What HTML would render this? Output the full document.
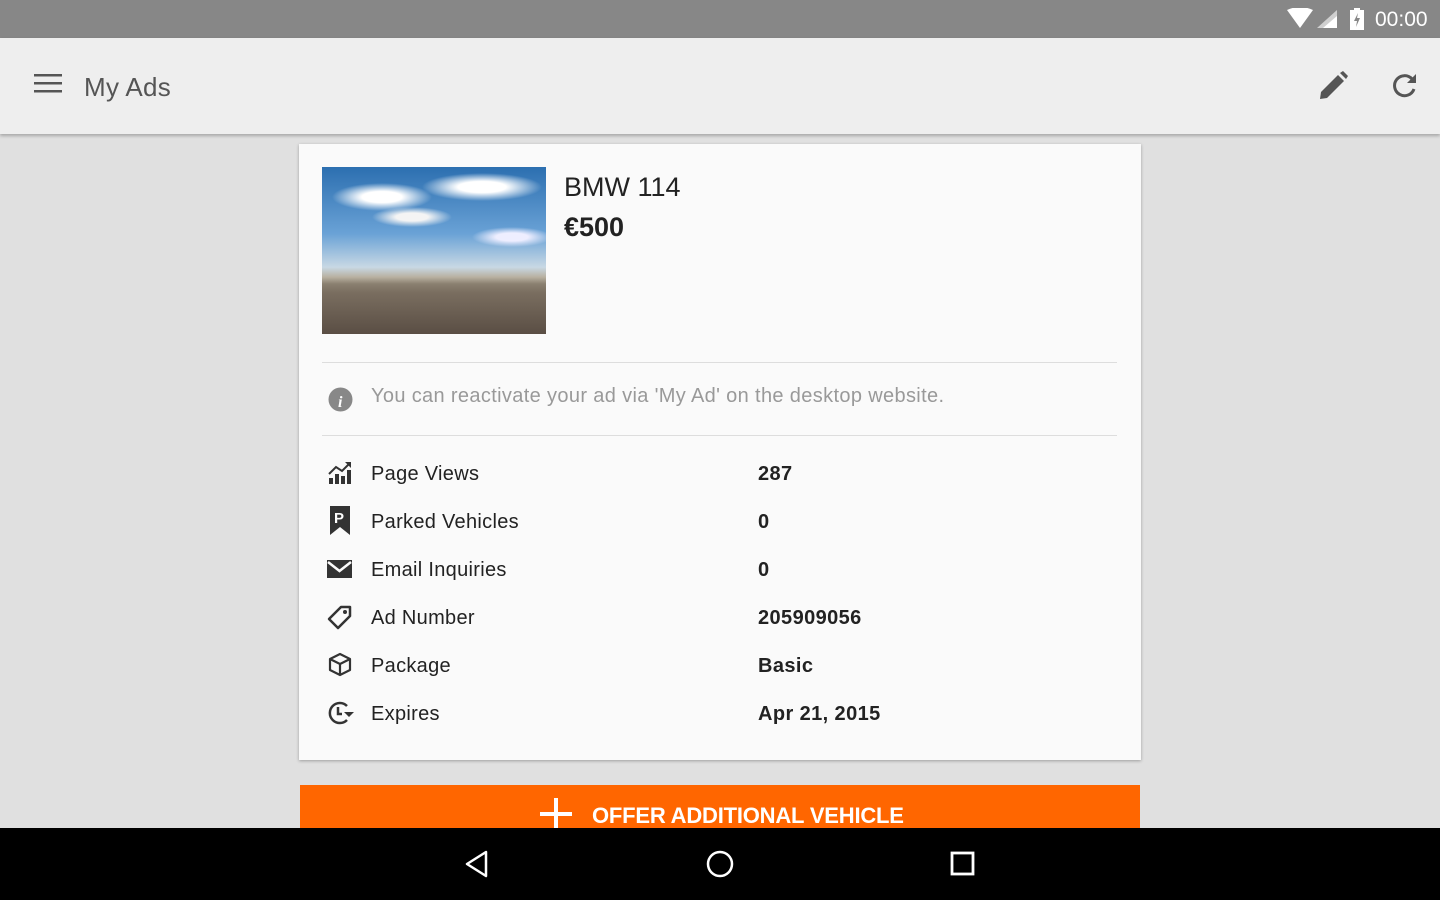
<!DOCTYPE html>
<html><head><meta charset="utf-8"><style>
*{margin:0;padding:0;box-sizing:border-box}
body{width:1440px;height:900px;overflow:hidden;background:#e0e0e0;font-family:"Liberation Sans",Roboto,sans-serif;position:relative}
.sb{position:absolute;top:0;left:0;width:1440px;height:38px;background:#878787;color:#fff}
.tb{position:absolute;top:38px;left:0;width:1440px;height:96px;background:#eeeeee;box-shadow:0 2px 3px rgba(0,0,0,.25)}
.card{position:absolute;left:299px;top:144px;width:842px;height:616px;background:#fafafa;box-shadow:0 1px 3px rgba(0,0,0,.3)}
.row{position:absolute;left:72px;font-size:20px;color:#222;letter-spacing:.3px}
.val{position:absolute;left:459px;font-size:20px;font-weight:bold;color:#222;letter-spacing:.4px}
.ic{position:absolute;left:28px}
.nav{position:absolute;top:828px;left:0;width:1440px;height:72px;background:#000}
.btn{position:absolute;left:300px;top:785px;width:840px;height:60px;background:#ff6600;color:#fff;font-size:22px;font-weight:bold;letter-spacing:-.2px}
</style></head><body>
<div class="sb">
<svg style="position:absolute;left:1287px;top:8px" width="52" height="22"><path d="M0 2 Q13 -4 26 2 L13 20Z" fill="#fff"/><path d="M30 20 L50 2 V20Z" fill="#fff" opacity=".6"/><path d="M36 20 L50 8 V20Z" fill="#fff"/></svg>
<svg style="position:absolute;left:1349px;top:7px" width="16" height="24"><rect x="1" y="3" width="14" height="20" fill="#fff"/><rect x="5" y="1" width="6" height="3" fill="#fff"/><path d="M9 6 L5 14 H8 L7 20 L11 11 H8Z" fill="#878787"/></svg>
<div style="position:absolute;left:1375px;top:8px;font-size:21px">00:00</div>
</div>
<div class="tb">
<svg style="position:absolute;left:34px;top:36px" width="28" height="20"><rect y="0" width="28" height="2.5" fill="#555"/><rect y="8" width="28" height="2.5" fill="#555"/><rect y="16" width="28" height="2.5" fill="#555"/></svg>
<div style="position:absolute;left:84px;top:34px;font-size:26px;color:#555;letter-spacing:.3px">My Ads</div>
<svg style="position:absolute;left:1318px;top:33px" width="30" height="30"><path d="M2 28 L3 21 L20 4 L26 10 L9 27Z" fill="#555"/><path d="M22 2 L25 0 L30 5 L28 8Z" fill="#555"/></svg>
<svg style="position:absolute;left:1390px;top:33px" width="30" height="30"><path d="M22 8 A10 10 0 1 0 24 18" fill="none" stroke="#555" stroke-width="3"/><path d="M17 12 L26 12 L26 3Z" fill="#555"/></svg>
</div>
<div class="card">
<div style="position:absolute;left:23px;top:23px;width:224px;height:167px;background:radial-gradient(ellipse 50px 14px at 60px 30px,#fff 40%,transparent 100%),radial-gradient(ellipse 60px 14px at 160px 20px,#fff 40%,transparent 100%),radial-gradient(ellipse 40px 10px at 90px 50px,#f4f4f4 40%,transparent 100%),radial-gradient(ellipse 40px 10px at 190px 70px,#eef 40%,transparent 100%),linear-gradient(#2c6fb0 0%,#6aa2d6 40%,#c8d8e4 60%,#b8b0a0 66%,#8a8070 70%,#7a6e60 75%,#5a4e44 100%)"></div>
<div style="position:absolute;left:265px;top:28px;font-size:27px;color:#222">BMW 114</div>
<div style="position:absolute;left:265px;top:68px;font-size:27px;font-weight:bold;color:#222">€500</div>
<div style="position:absolute;left:23px;top:218px;width:795px;height:1px;background:#ddd"></div>
<svg style="position:absolute;left:29px;top:243px" width="25" height="25"><circle cx="12.5" cy="12.5" r="12" fill="#888"/><text x="10" y="20" font-size="16" font-style="italic" font-weight="bold" fill="#fff" font-family="Liberation Serif">i</text></svg>
<div style="position:absolute;left:72px;top:241px;font-size:20px;color:#999;letter-spacing:.35px">You can reactivate your ad via 'My Ad' on the desktop website.</div>
<div style="position:absolute;left:23px;top:291px;width:795px;height:1px;background:#ddd"></div>
<svg class="ic" style="top:316px" width="26" height="26"><rect x="2" y="18" width="4" height="6" fill="#333"/><rect x="8" y="14" width="4" height="10" fill="#333"/><rect x="14" y="16" width="4" height="8" fill="#333"/><rect x="20" y="10" width="4" height="14" fill="#333"/><path d="M2 14 L9 7 L15 11 L23 3" fill="none" stroke="#333" stroke-width="2"/><path d="M18 2 H24 V8Z" fill="#333"/></svg>
<div class="row" style="top:319px">Page Views</div><div class="val" style="top:319px">287</div>
<svg class="ic" style="top:362px" width="26" height="30"><path d="M3 0 H23 V29 L13 21 L3 29Z" fill="#333"/><text x="7" y="17" font-size="15" font-weight="bold" fill="#fff">P</text></svg>
<div class="row" style="top:367px">Parked Vehicles</div><div class="val" style="top:367px">0</div>
<svg class="ic" style="top:416px" width="26" height="20"><rect x="0" y="0" width="25" height="18" fill="#333"/><path d="M1 2 L12.5 11 L24 2" fill="none" stroke="#fafafa" stroke-width="2.5"/></svg>
<div class="row" style="top:415px">Email Inquiries</div><div class="val" style="top:415px">0</div>
<svg class="ic" style="top:460px" width="26" height="26"><path d="M14 3 H23 V12 L11 24 L2 15Z" fill="none" stroke="#333" stroke-width="2.5" stroke-linejoin="round"/><circle cx="18" cy="8" r="2" fill="#333"/></svg>
<div class="row" style="top:463px">Ad Number</div><div class="val" style="top:463px">205909056</div>
<svg class="ic" style="top:508px" width="26" height="26"><path d="M13 2 L23 7 V18 L13 23 L3 18 V7Z M3 7 L13 12 L23 7 M13 12 V23" fill="none" stroke="#333" stroke-width="2.2" stroke-linejoin="round"/></svg>
<div class="row" style="top:511px">Package</div><div class="val" style="top:511px">Basic</div>
<svg class="ic" style="top:556px" width="28" height="26"><path d="M20 6 A10 10 0 1 0 20 20" fill="none" stroke="#333" stroke-width="2.5"/><path d="M11 7 V14 H15" fill="none" stroke="#333" stroke-width="2.5"/><path d="M17 12 H27 L22 17Z" fill="#333"/></svg>
<div class="row" style="top:559px">Expires</div><div class="val" style="top:559px">Apr 21, 2015</div>
</div>
<div class="btn"><svg style="position:absolute;left:240px;top:13px" width="32" height="32"><rect x="14" y="0" width="4" height="32" fill="#fff"/><rect x="0" y="14" width="32" height="4" fill="#fff"/></svg><div style="position:absolute;left:292px;top:18px">OFFER ADDITIONAL VEHICLE</div></div>
<div class="nav">
<svg style="position:absolute;left:464px;top:22px" width="26" height="28"><path d="M22 2 L3 14 L22 26Z" fill="none" stroke="#fff" stroke-width="2.5" stroke-linejoin="round"/></svg>
<svg style="position:absolute;left:706px;top:22px" width="28" height="28"><circle cx="14" cy="14" r="12" fill="none" stroke="#fff" stroke-width="2.5"/></svg>
<svg style="position:absolute;left:950px;top:23px" width="26" height="26"><rect x="2" y="2" width="21" height="21" fill="none" stroke="#fff" stroke-width="2.8"/></svg>
</div>
</body></html>
